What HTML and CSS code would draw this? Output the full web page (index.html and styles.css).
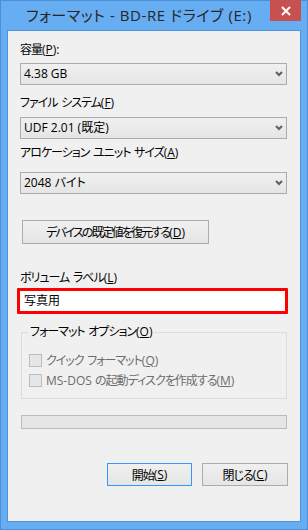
FILE: index.html
```html
<!DOCTYPE html>
<html lang="ja">
<head>
<meta charset="utf-8">
<title>フォーマット</title>
<link rel="stylesheet" href="styles.css">
</head>
<body>
<div class="window">
  <div class="titlebar">
    <div class="title">フォーマット - BD-RE ドライブ (E:)</div>
    <div class="close">
      <svg width="10" height="10" viewBox="0 0 10 10"><path d="M1 1L9 9M9 1L1 9" stroke="#fff" stroke-width="2"/></svg>
    </div>
  </div>
  <div class="client">
    <div class="label l1">容量<span class="lat">(<u>P</u>):</span></div>
    <div class="select s1"><span>4.38 GB</span><svg class="arrow" width="8" height="6" viewBox="0 0 8 6"><path d="M1 1L4 4L7 1" stroke="#5f5f5f" stroke-width="2" fill="none"/></svg></div>
    <div class="label l2">ファイル システム<span class="lat">(<u>F</u>)</span></div>
    <div class="select s2"><span>UDF 2.01 (既定)</span><svg class="arrow" width="8" height="6" viewBox="0 0 8 6"><path d="M1 1L4 4L7 1" stroke="#5f5f5f" stroke-width="2" fill="none"/></svg></div>
    <div class="label l3">アロケーション ユニット サイズ<span class="lat">(<u>A</u>)</span></div>
    <div class="select s3"><span>2048 バイト</span><svg class="arrow" width="8" height="6" viewBox="0 0 8 6"><path d="M1 1L4 4L7 1" stroke="#5f5f5f" stroke-width="2" fill="none"/></svg></div>
    <div class="button reset">デバイスの既定値を復元する<span class="lat">(<u>D</u>)</span></div>
    <div class="label l4">ボリューム ラベル<span class="lat">(<u>L</u>)</span></div>
    <div class="textbox">写真用</div>
    <fieldset class="group">
      <legend>フォーマット オプション<span class="lat">(<u>O</u>)</span></legend>
      <div class="check"><span class="box"></span><span>クイック フォーマット<span class="lat">(<u>Q</u>)</span></span></div>
      <div class="check"><span class="box"></span><span><span class="lat">MS-DOS </span>の起動ディスクを作成する<span class="lat">(<u>M</u>)</span></span></div>
    </fieldset>
    <div class="progress"></div>
    <div class="actions">
      <div class="button start">開始<span class="lat">(<u>S</u>)</span></div>
      <div class="button closebtn">閉じる<span class="lat">(<u>C</u>)</span></div>
    </div>
  </div>
</div>
</body>
</html>
```
FILE: styles.css
```css
* { box-sizing: border-box; }
html, body { margin: 0; padding: 0; }
body {
  width: 308px;
  height: 530px;
  font-family: "Open Sans", "Noto Sans CJK JP", sans-serif;
  font-feature-settings: "palt";
  font-size: 12px;
  color: #000;
  overflow: hidden;
}
.window {
  width: 308px;
  height: 530px;
  background: #66adf2;
  border: 1px solid #4a8fd8;
  display: flex;
  flex-direction: column;
}
.titlebar {
  margin-top: -1px;
  height: 30px;
  display: flex;
  align-items: flex-start;
}
.title {
  flex: 1;
  padding-left: 25px;
  padding-top: 4px;
  font-size: 15px;
  line-height: 22px;
  color: #262626;
  white-space: nowrap;
  letter-spacing: 0.6px;
}
.close {
  width: 31px;
  height: 21px;
  margin-right: 6px;
  background: #c75050;
  display: flex;
  align-items: center;
  justify-content: center;
}
.client {
  margin: 0 6px 7px 6px;
  height: 492px;
  background: #f0f0f0;
  border: 1px solid #4d93dc;
  padding: 11px 12px 0 12px;
  display: flex;
  flex-direction: column;
  align-items: flex-start;
}
.lat { letter-spacing: 0; word-spacing: 0; }
.label {
  line-height: 16px;
  height: 16px;
  white-space: nowrap;
  letter-spacing: -1px;
  word-spacing: 1.5px;
}
.l2 { margin-top: 10px; }
.l3 { margin-top: 6px; }
.l4 { margin-top: 26px; }
.select {
  width: 267px;
  height: 22px;
  border: 1px solid #acacac;
  background: linear-gradient(#f0f0f0, #e5e5e5);
  display: flex;
  align-items: center;
  justify-content: space-between;
  padding: 0 3px 0 3px;
  line-height: 20px;
}
.s1 { margin-top: 5px; }
.s2 { margin-top: 6px; }
.s3 { margin-top: 11px; }
.button {
  height: 24px;
  border: 1px solid #acacac;
  background: linear-gradient(#f0f0f0, #e5e5e5);
  display: flex;
  align-items: center;
  justify-content: center;
  white-space: nowrap;
  letter-spacing: -1px;
}
.reset {
  margin-top: 26px;
  margin-left: 2px;
  width: 187px;
  letter-spacing: -1.9px;
}
.textbox {
  margin-top: 2px;
  margin-left: -3px;
  width: 271px;
  height: 26px;
  border: 3px solid #ff0000;
  border-radius: 1px;
  background: #fff;
  padding-left: 4px;
  line-height: 20px;
}
.group {
  margin: 10px 0 0 1px;
  width: 266px;
  height: 75px;
  border: 1px solid #dcdcdc;
  padding: 10px 0 0 7px;
}
.group legend {
  padding: 0 2px;
  margin-left: -1px;
  line-height: 16px;
  font-size: 12px;
  letter-spacing: -1px;
  word-spacing: 1.5px;
}
.check {
  height: 20px;
  display: flex;
  align-items: center;
  gap: 4px;
  color: #6d6d6d;
  white-space: nowrap;
  letter-spacing: -1px;
  word-spacing: 1.5px;
}
.box {
  width: 13px;
  height: 13px;
  border: 1px solid #bcbcbc;
  background: #e6e6e6;
}
.progress {
  margin: 16px 0 0 1px;
  width: 266px;
  height: 14px;
  border: 1px solid #bcbcbc;
  background: #e6e6e6;
}
.actions {
  margin-top: 34px;
  width: 268px;
  display: flex;
  justify-content: flex-end;
  gap: 10px;
}
.start, .closebtn { height: 23px; }
.start {
  width: 85px;
  border-color: #3399ff;
}
.closebtn { width: 86px; }
```
